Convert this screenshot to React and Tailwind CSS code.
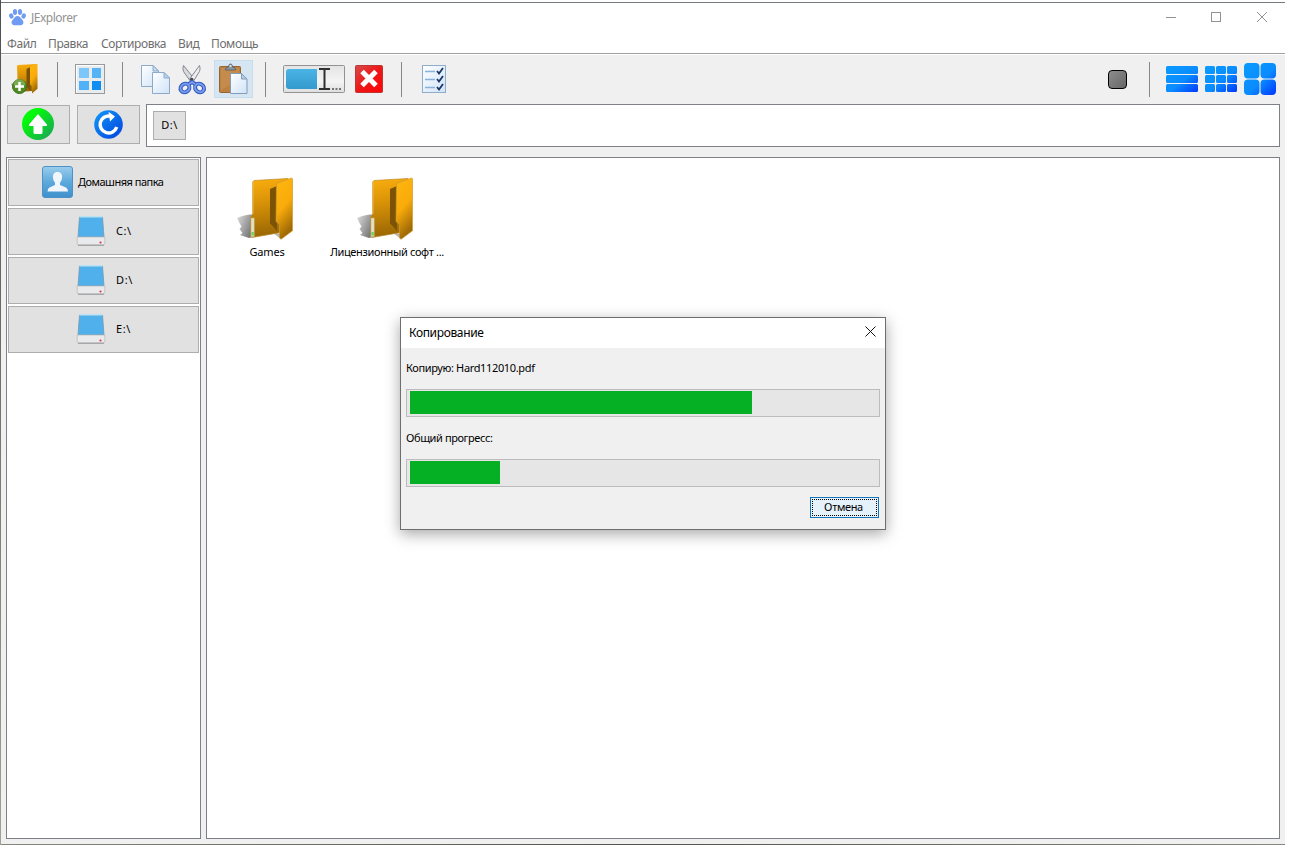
import React from "react";

const UI = "font-['Noto_Sans','Open_Sans',sans-serif]";

function Gradients() {
  return (
    <svg width="0" height="0" className="absolute">
      <defs>
        <linearGradient id="gold" x1="0" y1="0" x2="0.1" y2="1">
          <stop offset="0" stopColor="#fbae0d" />
          <stop offset="0.4" stopColor="#dc9508" />
          <stop offset="1" stopColor="#9a6704" />
        </linearGradient>
        <linearGradient id="goldFront" x1="0" y1="0" x2="0.3" y2="1">
          <stop offset="0" stopColor="#ffb60e" />
          <stop offset="0.55" stopColor="#f9ab0a" />
          <stop offset="1" stopColor="#a06b05" />
        </linearGradient>
        <linearGradient id="shade" x1="0" y1="0" x2="1" y2="0.6">
          <stop offset="0" stopColor="#dedede" />
          <stop offset="1" stopColor="#777" />
        </linearGradient>
        <linearGradient id="azure" x1="0" y1="0" x2="1" y2="1">
          <stop offset="0" stopColor="#0a9bff" />
          <stop offset="0.55" stopColor="#0a8cff" />
          <stop offset="1" stopColor="#0038ff" />
        </linearGradient>
        <linearGradient id="refresh" x1="0" y1="0" x2="1" y2="1">
          <stop offset="0" stopColor="#109bf8" />
          <stop offset="1" stopColor="#0440dd" />
        </linearGradient>
        <linearGradient id="page" x1="0" y1="0" x2="1" y2="1">
          <stop offset="0" stopColor="#ffffff" />
          <stop offset="1" stopColor="#cfe3f8" />
        </linearGradient>
        <linearGradient id="user" x1="0" y1="0" x2="0" y2="1">
          <stop offset="0" stopColor="#9ccdec" />
          <stop offset="0.5" stopColor="#5ca9dc" />
          <stop offset="1" stopColor="#3f90cc" />
        </linearGradient>
      </defs>
    </svg>
  );
}

function Paw() {
  return (
    <svg width="17" height="17" viewBox="0 0 17 17" fill="#6f9bf3">
      <ellipse cx="2.3" cy="7" rx="2.1" ry="2.7" transform="rotate(-20 2.3 7)" />
      <ellipse cx="6" cy="3" rx="2.1" ry="2.9" />
      <ellipse cx="11" cy="3" rx="2.1" ry="2.9" />
      <ellipse cx="14.700" cy="7" rx="2.1" ry="2.7" transform="rotate(20 14.7 7)" />
      <path d="M8.500 7c2.200 0 2.800 1.700 4.300 3.200 1.700 1.600 2 3.200 1.300 4.600-.8 1.500-2.600 1.700-5.600 1.400-3 .3-4.800.1-5.600-1.400-.7-1.400-.4-3 1.300-4.600C5.700 8.700 6.300 7 8.500 7z" />
    </svg>
  );
}

function Folder() {
  return (
    <svg width="58" height="64" viewBox="0 0 58 64">
      <path d="M0 41c4-2 9-3 13-3.500h3V60l-4 1c-3-1-6-2-9-3l2.500-2-3-4 2-2.500-2-3.500z" fill="url(#shade)" />
      <path d="M36 56l8 1v5z" fill="#b5b5b5" />
      <path d="M15.500 5l1.500-1.500L51 1.500l-7 54-29 5-1.200-1V40l1.700-2.500z" fill="url(#gold)" stroke="#bd8b28" strokeWidth=".7" />
      <path d="M33 12l7-3v45l-3-3.500-4-4z" fill="#7c5205" />
      <path d="M39.500 6.500l15-5.500 1 .8v52L44 62.300l-1.500-1.300V47.500L39 44.500z" fill="url(#goldFront)" stroke="#cf9a35" strokeWidth=".7" />
      <path d="M14 41h3.300v18.500L14 60z" fill="#e4e1c4" stroke="#b9ac70" strokeWidth=".5" />
      <path d="M14.500 55h2.300v3.500h-2.300z" fill="#69d05b" />
      <path d="M15.900 5v32" stroke="#f4d483" strokeWidth=".7" />
    </svg>
  );
}

function NewFolder() {
  return (
    <svg width="29" height="32" viewBox="0 0 29 32">
      <path d="M0 21l7-2 1 9-4-1z" fill="#aaa" />
      <path d="M6 3l1-1 18-1-4 27-14 1z" fill="url(#gold)" />
      <path d="M15.500 6l4-2v24l-4-4z" fill="#7c5205" />
      <path d="M19 3.500L26.500.8v25L21 30.500V23l-2-1.500z" fill="url(#goldFront)" />
      <circle cx="8.500" cy="23.500" r="7" fill="#4e8b22" stroke="#3c6d1b" />
      <path d="M2.500 22a6 6 0 0 1 12 0q-6 2-12 0z" fill="#86b65b" opacity=".75" />
      <path d="M8.500 19v9M4 23.500h9" stroke="#fff" strokeWidth="2.500" />
    </svg>
  );
}

function SelectAll() {
  return (
    <svg width="30" height="30" viewBox="0 0 30 30">
      <rect x=".5" y=".5" width="29" height="29" fill="#e9ecee" stroke="#969a9d" />
      <path d="M1.500 28V1.500H28" fill="none" stroke="#fff" />
      <rect x="4" y="4" width="10" height="10" fill="#7cc6f9" />
      <rect x="17" y="4" width="9" height="10" fill="#55b3f6" />
      <rect x="4" y="17" width="10" height="9" fill="#50b1f6" />
      <rect x="17" y="17" width="9" height="9" fill="#0e8df2" />
    </svg>
  );
}

function Copy() {
  return (
    <svg width="30" height="31" viewBox="0 0 30 31" fill="url(#page)" stroke="#8eaaca">
      <path d="M.5 1.500H12l5.500 5.500v15.500H.5z" />
      <path d="M12 1.500V7h5.500z" fill="#c5dcf3" />
      <path d="M11.500 8.500H23l5.500 5.500v15.500h-17z" />
      <path d="M23 8.500V14h5.500z" fill="#b9d4f0" />
    </svg>
  );
}

function Scissors() {
  return (
    <svg width="29" height="31" viewBox="0 0 29 31">
      <path d="M5.500 1.500C4.500 4.500 5 7 6.500 9l6.500 9 3-3.500z" fill="#d9dadd" stroke="#85868c" />
      <path d="M21.500 1.500c1 3 .5 5.500-1 7.500L15 18l-3-3.500z" fill="#eeeef1" stroke="#85868c" />
      <circle cx="13.700" cy="15.500" r="1.800" fill="#444a58" />
      <g fill="none" stroke="#3159bd" strokeWidth="4">
        <ellipse cx="7" cy="24" rx="4.700" ry="4" transform="rotate(-35 7 24)" />
        <ellipse cx="21.500" cy="24" rx="4.700" ry="4" transform="rotate(35 21.5 24)" />
        <path d="M10 20.500l4-2.500 4 2.500" />
      </g>
      <g fill="none" stroke="#799cf0" strokeWidth="2">
        <ellipse cx="7" cy="24" rx="4.700" ry="4" transform="rotate(-35 7 24)" />
        <ellipse cx="21.500" cy="24" rx="4.700" ry="4" transform="rotate(35 21.5 24)" />
        <path d="M11 20l3-2 3 2" />
      </g>
    </svg>
  );
}

function Paste() {
  return (
    <svg width="29" height="32" viewBox="0 0 29 32">
      <rect x=".5" y="3.500" width="21" height="26" rx="1" fill="#bc803f" stroke="#97652e" />
      <path d="M2 5h18v12L2 27z" fill="#cb965a" opacity=".5" />
      <path d="M6.500 7V5.500Q8 4 9.500 4c0-4 4-4 4 0q1.500 0 3 1.500V7z" fill="#8b959f" stroke="#505b65" strokeWidth=".8" />
      <circle cx="11.500" cy="3" r="1.100" fill="#e7eef4" />
      <path d="M11.500 10.500h11l5.500 5.500V30.500H11.500z" fill="url(#page)" stroke="#839cb8" />
      <path d="M22.500 10.500V16H28z" fill="#b2cce9" stroke="#839cb8" />
    </svg>
  );
}

function Rename() {
  return (
    <svg width="62" height="28" viewBox="0 0 62 28">
      <defs>
        <linearGradient id="box" x1="0" y1="0" x2="0" y2="1">
          <stop offset="0" stopColor="#e4e4e4" /><stop offset=".6" stopColor="#f4f4f4" /><stop offset="1" stopColor="#dedede" />
        </linearGradient>
        <linearGradient id="field" x1="0" y1="0" x2="0" y2="1">
          <stop offset="0" stopColor="#4ab4e6" /><stop offset="1" stopColor="#3499ce" />
        </linearGradient>
      </defs>
      <rect x=".5" y=".5" width="61" height="27" rx="1" fill="url(#box)" stroke="#929292" />
      <path d="M34 4H6Q3 4 3 7v14q0 3 3 3h28z" fill="url(#field)" />
      <path d="M36 4h11M36 24h11M41.500 4v20" stroke="#303030" strokeWidth="2" />
      <path d="M49 24h2M52.500 24h2M56 24h2" stroke="#4d4d4d" strokeWidth="1.500" />
    </svg>
  );
}

function Delete() {
  return (
    <svg width="28" height="28" viewBox="0 0 28 28">
      <defs>
        <linearGradient id="red" x1="0" y1="0" x2="1" y2="1">
          <stop offset="0" stopColor="#d84b4b" /><stop offset=".5" stopColor="#ee1717" /><stop offset="1" stopColor="#ff0505" />
        </linearGradient>
      </defs>
      <rect x=".5" y=".5" width="27" height="27" rx="1" fill="url(#red)" stroke="#bd3535" />
      <path d="M7 6.500l14 14M21 6.500l-14 14" stroke="#fff" strokeWidth="5" />
    </svg>
  );
}

function Checklist() {
  return (
    <svg width="24" height="28" viewBox="0 0 24 28">
      <rect x=".5" y=".5" width="23" height="27" fill="url(#page)" stroke="#8fadca" />
      <path d="M3 6.500h10M3 14.500h10M3 22.500h10" stroke="#8ab1d9" strokeWidth="1.500" />
      <path d="M15 6l2 2.500 4-5.500M15 14l2 2.500 4-5.500M15 22l2 2.500 4-5.500" fill="none" stroke="#183766" strokeWidth="1.800" />
    </svg>
  );
}

function Tiles({ cols, rows, w, h, gap, r }) {
  const tiles = [];
  for (let y = 0; y < rows; y++) {
    for (let x = 0; x < cols; x++) tiles.push([x, y]);
  }
  const W = cols * w + (cols - 1) * gap;
  const H = rows * h + (rows - 1) * gap;
  const id = `clip${cols}${rows}`;
  return (
    <svg width={W} height={H} viewBox={`0 0 ${W} ${H}`}>
      <clipPath id={id}>
        {tiles.map(([x, y]) => (
          <rect key={`${x}-${y}`} x={x * (w + gap)} y={y * (h + gap)} width={w} height={h} rx={r} />
        ))}
      </clipPath>
      <rect width={W} height={H} fill="url(#azure)" clipPath={`url(#${id})`} />
    </svg>
  );
}

function UpArrow() {
  return (
    <svg width="32" height="32" viewBox="0 0 32 32">
      <defs>
        <linearGradient id="green" x1="0" y1="0" x2="1" y2="1">
          <stop offset=".25" stopColor="#02fb08" /><stop offset="1" stopColor="#1e9d5e" />
        </linearGradient>
      </defs>
      <circle cx="16" cy="16" r="16" fill="url(#green)" />
      <path d="M16 6L25 16.500q.7 1.500-1 1.500h-3.500v6.500q0 1.500-1.500 1.500h-6q-1.500 0-1.500-1.500V18H8q-1.700 0-1-1.500z" fill="#fff" />
    </svg>
  );
}

function Refresh() {
  return (
    <svg width="29" height="29" viewBox="0 0 29 29">
      <circle cx="14.500" cy="14.500" r="14.300" fill="url(#refresh)" />
      <path d="M16.500 6.200A8.500 8.500 0 1 0 22.700 17" fill="none" stroke="#fff" strokeWidth="3.400" />
      <path d="M14.500 1.800l6.500 4.700-5 5z" fill="#fff" />
    </svg>
  );
}

function UserIcon() {
  return (
    <svg width="31" height="32" viewBox="0 0 31 32">
      <rect x=".5" y=".5" width="30" height="31" rx="2.500" fill="url(#user)" stroke="#4b92c9" />
      <path d="M15.500 6c3.500 0 5 2.500 4.500 6-.3 2-1 3.500-2 4.500v2.500l6 2.500q2 1 2 4H5.500q0-3 2-4l5.500-2.500v-2.500c-1-1-1.700-2.500-2-4.500-.5-3.500 1-6 4.500-6z" fill="#f0f6fc" />
    </svg>
  );
}

function Drive() {
  return (
    <svg width="30" height="32" viewBox="0 0 30 32">
      <path d="M3.500 2h23L28 22H2z" fill="#50b0ec" stroke="#7099b5" strokeWidth=".8" />
      <path d="M3.500 1.800h23" stroke="#b9e4f7" strokeWidth="1.500" />
      <path d="M1.200 22h27.600v6q0 2-2 2H3.200q-2 0-2-2z" fill="#e9eaeb" stroke="#b5b7ba" strokeWidth=".7" />
      <path d="M2 30.200h26" stroke="#969696" />
      <circle cx="24.500" cy="27.500" r="1.100" fill="#dc3548" />
    </svg>
  );
}

const Separator = ({ className }) => <div className={`mt-px h-[35px] w-px shrink-0 bg-[#85888c] ${className}`} />;

function TitleBar() {
  return (
    <header className="flex h-8 items-center bg-white pl-2 text-xs text-[#929292]">
      <div className="-mt-1"><Paw /></div>
      <span className="-mt-0.5 ml-[5px] w-12 whitespace-nowrap tracking-[-0.5px]">JExplorer</span>
      <svg className="mr-[17px] mb-1 ml-auto" width="102" height="12" viewBox="0 0 102 12" fill="none" stroke="#929292">
        <path d="M0 6.500h10M91 1l10 10M101 1L91 11" />
        <rect x="45.500" y="1.500" width="9" height="9" />
      </svg>
    </header>
  );
}

function MenuBar() {
  return (
    <nav className="flex h-[18px] items-center bg-white pl-[6px] text-xs whitespace-nowrap text-[#6e6e6e]">
      <span className="w-[41px] tracking-[-0.4px]">Файл</span>
      <span className="w-[53px] tracking-[-0.4px]">Правка</span>
      <span className="w-[77px] tracking-[-0.4px]">Сортировка</span>
      <span className="w-[33px] tracking-[-0.4px]">Вид</span>
      <span className="tracking-[-0.4px]">Помощь</span>
    </nav>
  );
}

function Toolbar() {
  return (
    <div className="flex h-[49px] items-center pb-px pl-[10px] pr-[9px]">
      <NewFolder />
      <Separator className="ml-[17px]" />
      <div className="ml-[17px]"><SelectAll /></div>
      <Separator className="ml-[17px]" />
      <div className="ml-[18px]"><Copy /></div>
      <div className="ml-[7px]"><Scissors /></div>
      <div className="ml-[7px] flex h-[38px] w-[39px] items-center justify-center border border-[#c5dded] bg-[#d5e5f1]"><Paste /></div>
      <Separator className="ml-3" />
      <div className="ml-[17px]"><Rename /></div>
      <div className="ml-[10px]"><Delete /></div>
      <Separator className="ml-[18px]" />
      <div className="ml-5"><Checklist /></div>
      <div className="mt-px ml-auto size-[19px] rounded-[4px] border border-black bg-linear-to-br from-[#8e8e8e] to-[#666]" />
      <Separator className="ml-[22px]" />
      <div className="ml-4"><Tiles cols={1} rows={3} w={32} h={8} gap={1} r={1.5} /></div>
      <div className="ml-[7px]"><Tiles cols={3} rows={3} w={10} h={8} gap={1} r={1.5} /></div>
      <div className="ml-[7px]"><Tiles cols={2} rows={2} w={15.5} h={15.5} gap={1} r={4} /></div>
    </div>
  );
}

function PathRow() {
  return (
    <div className="flex h-[43px] items-center pl-[6px] pr-[5px]">
      <button className="mb-[2px] flex h-[39px] w-[63px] items-center justify-center border border-[#adadad] bg-[#e1e1e1] pr-px pb-px"><UpArrow /></button>
      <button className="mb-[2px] ml-[7px] flex h-[39px] w-[63px] items-center justify-center border border-[#adadad] bg-[#e1e1e1] pr-px"><Refresh /></button>
      <div className="ml-[6px] flex h-[43px] flex-1 items-center border border-[#7d8087] bg-white pl-[6px]">
        <span className="flex h-[29px] w-[33px] items-center justify-center border border-[#adadad] bg-[#e1e1e1] text-[11px] tracking-[0.4px] text-black">D:\</span>
      </div>
    </div>
  );
}

function SideButton({ children }) {
  return <button className="flex h-[47px] items-center border border-[#adadad] bg-[#e1e1e1] text-[11px] whitespace-nowrap">{children}</button>;
}

function Sidebar() {
  return (
    <aside className="flex w-[195px] flex-col gap-[2px] border border-[#7d8087] bg-white p-px">
      <SideButton>
        <span className="mb-[2px] ml-[33px]"><UserIcon /></span>
        <span className="ml-[5px] tracking-[-0.5px]">Домашняя папка</span>
      </SideButton>
      {["C:\\", "D:\\", "E:\\"].map((name) => (
        <SideButton key={name}>
          <span className="mb-px ml-[67px]"><Drive /></span>
          <span className="ml-[10px] tracking-[0.6px]">{name}</span>
        </SideButton>
      ))}
    </aside>
  );
}

function FileItem({ name, className }) {
  return (
    <div className="flex w-[120px] flex-col items-center text-[11px] leading-4 whitespace-nowrap">
      <div className="pr-[2px]"><Folder /></div>
      <span className={`mt-[3px] ${className}`}>{name}</span>
    </div>
  );
}

function Progress({ fill }) {
  return (
    <div className="h-7 border border-[#bcbcbc] bg-[#e6e6e6] py-px pl-[3px]">
      <div className="h-[23px] bg-[#06b025]" style={{ width: fill }} />
    </div>
  );
}

function CopyDialog() {
  return (
    <section className="absolute top-[317px] left-[400px] flex h-[213px] w-[486px] flex-col border border-[#6e6e6e] bg-[#f0f0f0] text-[11px] leading-4 text-black shadow-[0_4px_14px_rgba(0,0,0,0.35)]">
      <div className="flex h-[30px] items-center justify-between bg-white pr-[9px] pl-2 text-xs">
        <span className="tracking-[-0.35px]">Копирование</span>
        <svg className="mb-[3px]" width="11" height="11" viewBox="0 0 11 11" stroke="#111"><path d="M.5.5l10 10M10.500.5l-10 10" /></svg>
      </div>
      <div className="flex flex-1 flex-col pr-[5px] pl-[5px]">
        <span className="mt-3 tracking-[-0.35px]">Копирую: Hard112010.pdf</span>
        <div className="mt-[13px]"><Progress fill={342} /></div>
        <span className="mt-[13px] tracking-[-0.4px]">Общий прогресс:</span>
        <div className="mt-[13px]"><Progress fill={90} /></div>
        <button className="mt-[10px] mr-px h-[21px] w-[69px] self-end border border-[#1573b8] bg-[#e5f1fb] p-px">
          <span className="flex h-full items-center justify-center border border-dotted border-black pr-[2px] pb-[2px] tracking-[-0.35px]">Отмена</span>
        </button>
      </div>
    </section>
  );
}

export default function App() {
  return (
    <div className={`relative flex h-[845px] w-[1289px] overflow-hidden bg-white text-black ${UI}`}>
      <Gradients />
      <div className="w-px bg-linear-to-b from-[#4d5056] via-[#77736d] to-[#a3a092]" />
      <main className="flex w-[1284px] flex-col bg-[#f0f0f0]">
        <div className="h-[3px] border-b border-[#747982] bg-white" />
        <TitleBar />
        <MenuBar />
        <div className="h-[2px] border-t border-[#a0a0a0] bg-white" />
        <Toolbar />
        <PathRow />
        <div className="mt-[10px] flex h-[682px] gap-[5px] pr-[5px] pl-[5px]">
          <Sidebar />
          <section className="flex flex-1 border border-[#7d8087] bg-white pt-[19px]">
            <FileItem name="Games" className="tracking-[-0.2px]" />
            <FileItem name="Лицензионный софт ..." className="tracking-[-0.35px]" />
          </section>
        </div>
        <div className="mt-[5px] h-px bg-linear-to-r from-[#84877c] via-[#51534d] to-[#88877c]" />
      </main>
      <CopyDialog />
    </div>
  );
}
